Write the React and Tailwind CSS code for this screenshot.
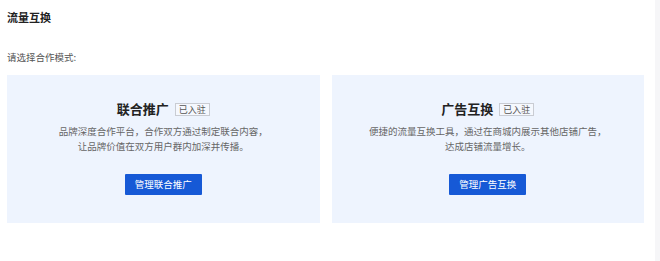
import React from "react";

const cards = [
  {
    title: "联合推广",
    lines: ["品牌深度合作平台，合作双方通过制定联合内容，", "让品牌价值在双方用户群内加深并传播。"],
    action: "管理联合推广",
  },
  {
    title: "广告互换",
    lines: ["便捷的流量互换工具，通过在商城内展示其他店铺广告，", "达成店铺流量增长。"],
    action: "管理广告互换",
  },
];

const ModeCard = ({ title, lines, action }) => (
  <div className="flex-1 bg-[#eef4fe] flex flex-col items-center pt-[26px] pb-[28px]">
    <div className="flex items-center h-[16px]">
      <span className="text-[13px] leading-[16px] font-bold text-[#222]">{title}</span>
      <span className="ml-[6px] border border-[#c9ccd3] text-[9px] leading-[11px] text-[#555] px-[3px] bg-white/40">
        已入驻
      </span>
    </div>
    <div className="mt-[7px] text-[9.5px] leading-[14.5px] text-[#666] text-center">
      {lines.map((l) => (
        <div key={l}>{l}</div>
      ))}
    </div>
    <button className="mt-[21px] h-[21px] px-[10px] bg-[#1659d6] text-white text-[9.5px] leading-[21px] rounded-[1px]">
      {action}
    </button>
  </div>
);

export default function App() {
  return (
    <div
      className="flex w-[660px] h-[261px] bg-white"
      style={{ fontFamily: '"Noto Sans CJK SC", "Noto Sans", sans-serif' }}
    >
      <div className="flex-1 pl-[7px] pr-[11px]">
        <div className="pt-[10px] text-[11px] leading-[14px] font-bold text-[#222]">流量互换</div>
        <div className="mt-[26px] text-[9.5px] leading-[14px] text-[#555]">请选择合作模式:</div>
        <div className="mt-[11px] flex gap-[12px]">
          {cards.map((c) => (
            <ModeCard key={c.title} {...c} />
          ))}
        </div>
      </div>
      <div className="w-[5px] bg-[#f6f6f8]" />
    </div>
  );
}
